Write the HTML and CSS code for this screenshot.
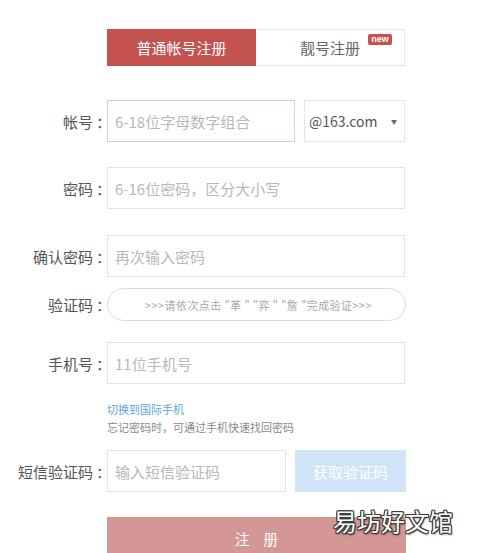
FILE: index.html
```html
<!DOCTYPE html>
<html lang="zh-CN">
<head>
<meta charset="utf-8">
<title>注册</title>
<link rel="stylesheet" href="styles.css">
</head>
<body>
<div class="page">
  <div class="tabs">
    <div class="tab tab-active">普通帐号注册</div>
    <div class="tab tab-plain">靓号注册<span class="badge">new</span></div>
  </div>

  <div class="row row-account">
    <div class="label">帐号<span class="colon">：</span></div>
    <div class="field field-account field-focus"><span class="ph">6-18位字母数字组合</span></div>
    <div class="select"><span class="select-text">@163.com</span><span class="arrow">▼</span></div>
  </div>

  <div class="row row-pass">
    <div class="label">密码<span class="colon">：</span></div>
    <div class="field field-full"><span class="ph">6-16位密码，区分大小写</span></div>
  </div>

  <div class="row row-confirm">
    <div class="label">确认密码<span class="colon">：</span></div>
    <div class="field field-full"><span class="ph">再次输入密码</span></div>
  </div>

  <div class="row row-captcha">
    <div class="label">验证码<span class="colon">：</span></div>
    <div class="captcha">&gt;&gt;&gt;请依次点击 "革 " "弈 " "詹 "完成验证&gt;&gt;&gt;</div>
  </div>

  <div class="row row-phone">
    <div class="label">手机号<span class="colon">：</span></div>
    <div class="field field-full"><span class="ph">11位手机号</span></div>
  </div>

  <div class="tips">
    <div class="tip-link">切换到国际手机</div>
    <div class="tip-text">忘记密码时，可通过手机快速找回密码</div>
  </div>

  <div class="row row-sms">
    <div class="label">短信验证码<span class="colon">：</span></div>
    <div class="field field-sms"><span class="ph">输入短信验证码</span></div>
    <div class="sms-btn">获取验证码</div>
  </div>

  <div class="submit-wrap">
    <div class="submit">注 册</div>
  </div>

  <div class="watermark">易坊好文馆</div>
</div>
</body>
</html>
```

FILE: styles.css
```css
* { box-sizing: border-box; }
html, body {
  margin: 0;
  padding: 0;
  background: #ffffff;
}
body {
  font-family: "Noto Sans CJK SC", "Noto Sans", sans-serif;
  color: #555;
}
.page {
  position: relative;
  width: 480px;
  height: 553px;
  overflow: hidden;
  padding-top: 29px;
}
.tabs {
  display: flex;
  margin-left: 107px;
  width: 298px;
  height: 37px;
}
.tab {
  width: 149px;
  height: 37px;
  display: flex;
  align-items: center;
  justify-content: center;
  font-size: 15px;
}
.tab-active {
  background: #c4524f;
  color: #fff;
}
.tab-plain {
  position: relative;
  border: 1px solid #e6e6e6;
  border-left: none;
  color: #666;
}
.badge {
  position: absolute;
  top: 4px;
  right: 12px;
  width: 24px;
  height: 11px;
  background: #c8504d;
  color: #fff;
  font-size: 9px;
  line-height: 11px;
  text-align: center;
  border-radius: 2px;
  font-family: "Liberation Sans", sans-serif;
  font-weight: bold;
}
.row {
  display: flex;
  align-items: center;
  height: 42px;
}
.row-account { margin-top: 34px; }
.row-pass { margin-top: 25px; }
.row-confirm { margin-top: 26px; }
.row-captcha { margin-top: 11px; height: 33px; }
.row-phone { margin-top: 21px; }
.row-sms { margin-top: 14px; }
.label {
  width: 108px;
  text-align: right;
  font-size: 15px;
  color: #555;
  margin-right: -1px;
  white-space: nowrap;
}
.colon {
  display: inline-block;
  margin-left: 3px;
  margin-right: -3px;
}
.field {
  height: 42px;
  border: 1px solid #e4e4e4;
  display: flex;
  align-items: center;
  padding-left: 7px;
  background: #fff;
}
.field-focus { border-color: #bcd6ec; }
.field-account { width: 188px; }
.field-full { width: 298px; }
.field-sms { width: 179px; }
.ph {
  font-size: 15px;
  color: #b8b8b8;
}
.select {
  width: 101px;
  height: 42px;
  margin-left: 9px;
  border: 1px solid #e6e6e6;
  display: flex;
  align-items: center;
  justify-content: space-between;
  padding-left: 4px;
  padding-right: 7px;
}
.select-text {
  font-size: 14px;
  color: #555;
}
.arrow {
  font-size: 6px;
  color: #666;
}
.captcha {
  width: 299px;
  height: 33px;
  border: 1px solid #dcdcdc;
  border-radius: 17px;
  display: flex;
  align-items: center;
  justify-content: center;
  font-size: 11px;
  letter-spacing: 0.4px;
  color: #a8a8a8;
  padding-left: 4px;
}
.tips {
  margin-top: 16px;
  margin-left: 107px;
  font-size: 11px;
  line-height: 18px;
}
.tip-link { color: #5fa3dd; }
.tip-text { color: #8a8a8a; }
.sms-btn {
  width: 111px;
  height: 42px;
  margin-left: 9px;
  background: #cfe4f7;
  color: #fff;
  font-size: 15px;
  display: flex;
  align-items: center;
  justify-content: center;
}
.submit-wrap {
  margin-top: 25px;
  margin-left: 107px;
}
.submit {
  width: 299px;
  height: 42px;
  background: #d49795;
  color: #fff;
  font-size: 15px;
  letter-spacing: 5px;
  padding-left: 5px;
  display: flex;
  align-items: center;
  justify-content: center;
}
.watermark {
  position: absolute;
  left: 333px;
  top: 503px;
  font-size: 24px;
  color: #fff;
  letter-spacing: 0;
  text-shadow:
    1px 0 0 #3a3a3a, -1px 0 0 #3a3a3a, 0 1px 0 #3a3a3a, 0 -1px 0 #3a3a3a,
    1px 1px 0 #3a3a3a, -1px -1px 0 #3a3a3a, 1px -1px 0 #3a3a3a, -1px 1px 0 #3a3a3a,
    1px 2px 2px rgba(0,0,0,0.35);
}
```
